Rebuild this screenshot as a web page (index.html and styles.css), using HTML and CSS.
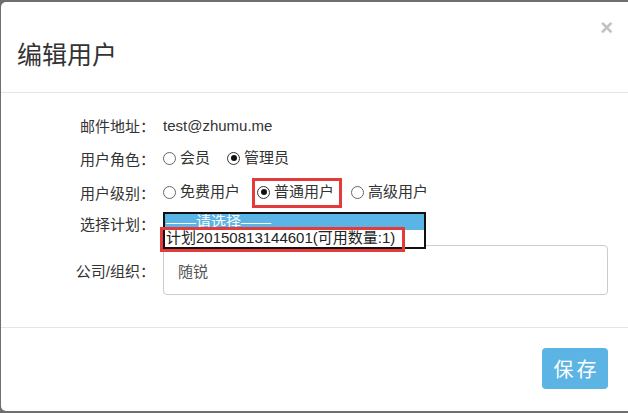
FILE: index.html
```html
<!DOCTYPE html>
<html lang="zh-CN">
<head>
<meta charset="utf-8">
<title>编辑用户</title>
<link rel="stylesheet" href="styles.css">
</head>
<body>
<div class="modal">
  <div class="modal-header">
    <h4 class="modal-title">编辑用户</h4>
    <span class="close">×</span>
  </div>
  <div class="modal-body">
    <div class="row r1">
      <label class="lbl">邮件地址：</label>
      <span class="val">test@zhumu.me</span>
    </div>
    <div class="row r2">
      <label class="lbl">用户角色：</label>
      <div class="radios">
        <span class="opt"><i class="radio"></i>会员</span>
        <span class="opt"><i class="radio on"></i>管理员</span>
      </div>
    </div>
    <div class="row r3">
      <label class="lbl">用户级别：</label>
      <div class="radios">
        <span class="opt"><i class="radio"></i>免费用户</span>
        <span class="opt mark"><i class="radio on"></i>普通用户<span class="redbox box1"></span></span>
        <span class="opt"><i class="radio"></i>高级用户</span>
      </div>
    </div>
    <div class="row plan">
      <label class="lbl">选择计划：</label>
      <div class="select-wrap">
        <div class="listbox">
          <div class="option sel">——请选择——</div>
          <div class="option">计划20150813144601(可用数量:1)</div>
        </div>
        <span class="redbox box2"></span>
      </div>
    </div>
    <div class="row company">
      <label class="lbl">公司/组织：</label>
      <div class="input">随锐</div>
    </div>
  </div>
  <div class="modal-footer">
    <button class="btn">保存</button>
  </div>
</div>
</body>
</html>
```
FILE: styles.css
```css
html, body {
  margin: 0;
  padding: 0;
}
body {
  background: #6f6f6f;
  width: 628px;
  height: 413px;
  overflow: hidden;
  font-family: "Liberation Sans", "Noto Sans CJK SC", sans-serif;
  font-size: 15px;
  color: #333;
}
.modal {
  margin: 2px 0 0 1px;
  height: 409px;
  background: #fff;
  border-radius: 5px 0 0 5px;
  display: flex;
  flex-direction: column;
}
.modal-header {
  height: 90px;
  border-bottom: 1px solid #e5e5e5;
  display: flex;
  align-items: center;
  padding: 0 16px 0 16px;
  position: relative;
}
.modal-title {
  margin: 0;
  font-weight: normal;
  font-size: 25px;
  color: #333;
  padding-top: 12px;
}
.close {
  position: absolute;
  right: 15px;
  top: 15px;
  font-size: 22px;
  font-weight: bold;
  color: #c2c2c2;
  line-height: 1;
}
.modal-body {
  padding: 16px 20px 0 20px;
  height: 218px;
  border-bottom: 1px solid #e5e5e5;
}
.row {
  display: flex;
  align-items: center;
  height: 32px;
}
.row.r2 {
  height: 34px;
}
.row.r3 {
  height: 34px;
}
.lbl {
  width: 134px;
  text-align: right;
  margin-right: 8px;
  flex: none;
}
.val {
  color: #333;
}
.radios {
  display: flex;
  align-items: center;
  gap: 17px;
}
.opt {
  display: flex;
  align-items: center;
  position: relative;
  height: 20px;
  line-height: 20px;
}
.radio {
  width: 11px;
  height: 11px;
  border: 1px solid #666;
  border-radius: 50%;
  margin-right: 4px;
  position: relative;
  box-sizing: content-box;
  flex: none;
}
.radio.on {
  border-color: #333;
}
.radio.on::after {
  content: "";
  position: absolute;
  left: 2.5px;
  top: 2.5px;
  width: 6px;
  height: 6px;
  border-radius: 50%;
  background: #111;
}
.redbox {
  position: absolute;
  border: 3px solid #e33a3a;
  box-sizing: border-box;
  pointer-events: none;
}
.box1 {
  left: -5px;
  right: -8px;
  top: -4px;
  bottom: -6px;
}
.row.plan {
  height: 36px;
  align-items: flex-start;
}
.row.plan .lbl {
  margin-top: 4px;
}
.select-wrap {
  position: relative;
  width: 263px;
  height: 36px;
}
.listbox {
  position: absolute;
  left: 0;
  top: 3px;
  width: 263px;
  height: 37px;
  border: 2px solid #111;
  box-sizing: border-box;
  background: #fff;
  z-index: 2;
}
.option {
  height: 16px;
  line-height: 16px;
  padding-left: 1px;
  color: #222;
  white-space: nowrap;
}
.option.sel {
  background: #5ab4e6;
  color: #fff;
}
.box2 {
  left: -3px;
  top: 18px;
  width: 245px;
  height: 25px;
  z-index: 3;
}
.row.company {
  height: 50px;
}
.input {
  flex: 1;
  height: 50px;
  box-sizing: border-box;
  border: 1px solid #ccc;
  border-radius: 4px;
  padding: 0 14px;
  display: flex;
  align-items: center;
  color: #555;
}
.modal-footer {
  display: flex;
  justify-content: flex-end;
  padding: 20px 20px 0 0;
}
.btn {
  width: 66px;
  height: 41px;
  border: none;
  border-radius: 4px;
  background: #5cb4e4;
  color: #fff;
  font-family: "Noto Sans CJK SC", sans-serif;
  font-size: 20px;
  letter-spacing: 3px;
  padding: 0 0 0 3px;
}
```
